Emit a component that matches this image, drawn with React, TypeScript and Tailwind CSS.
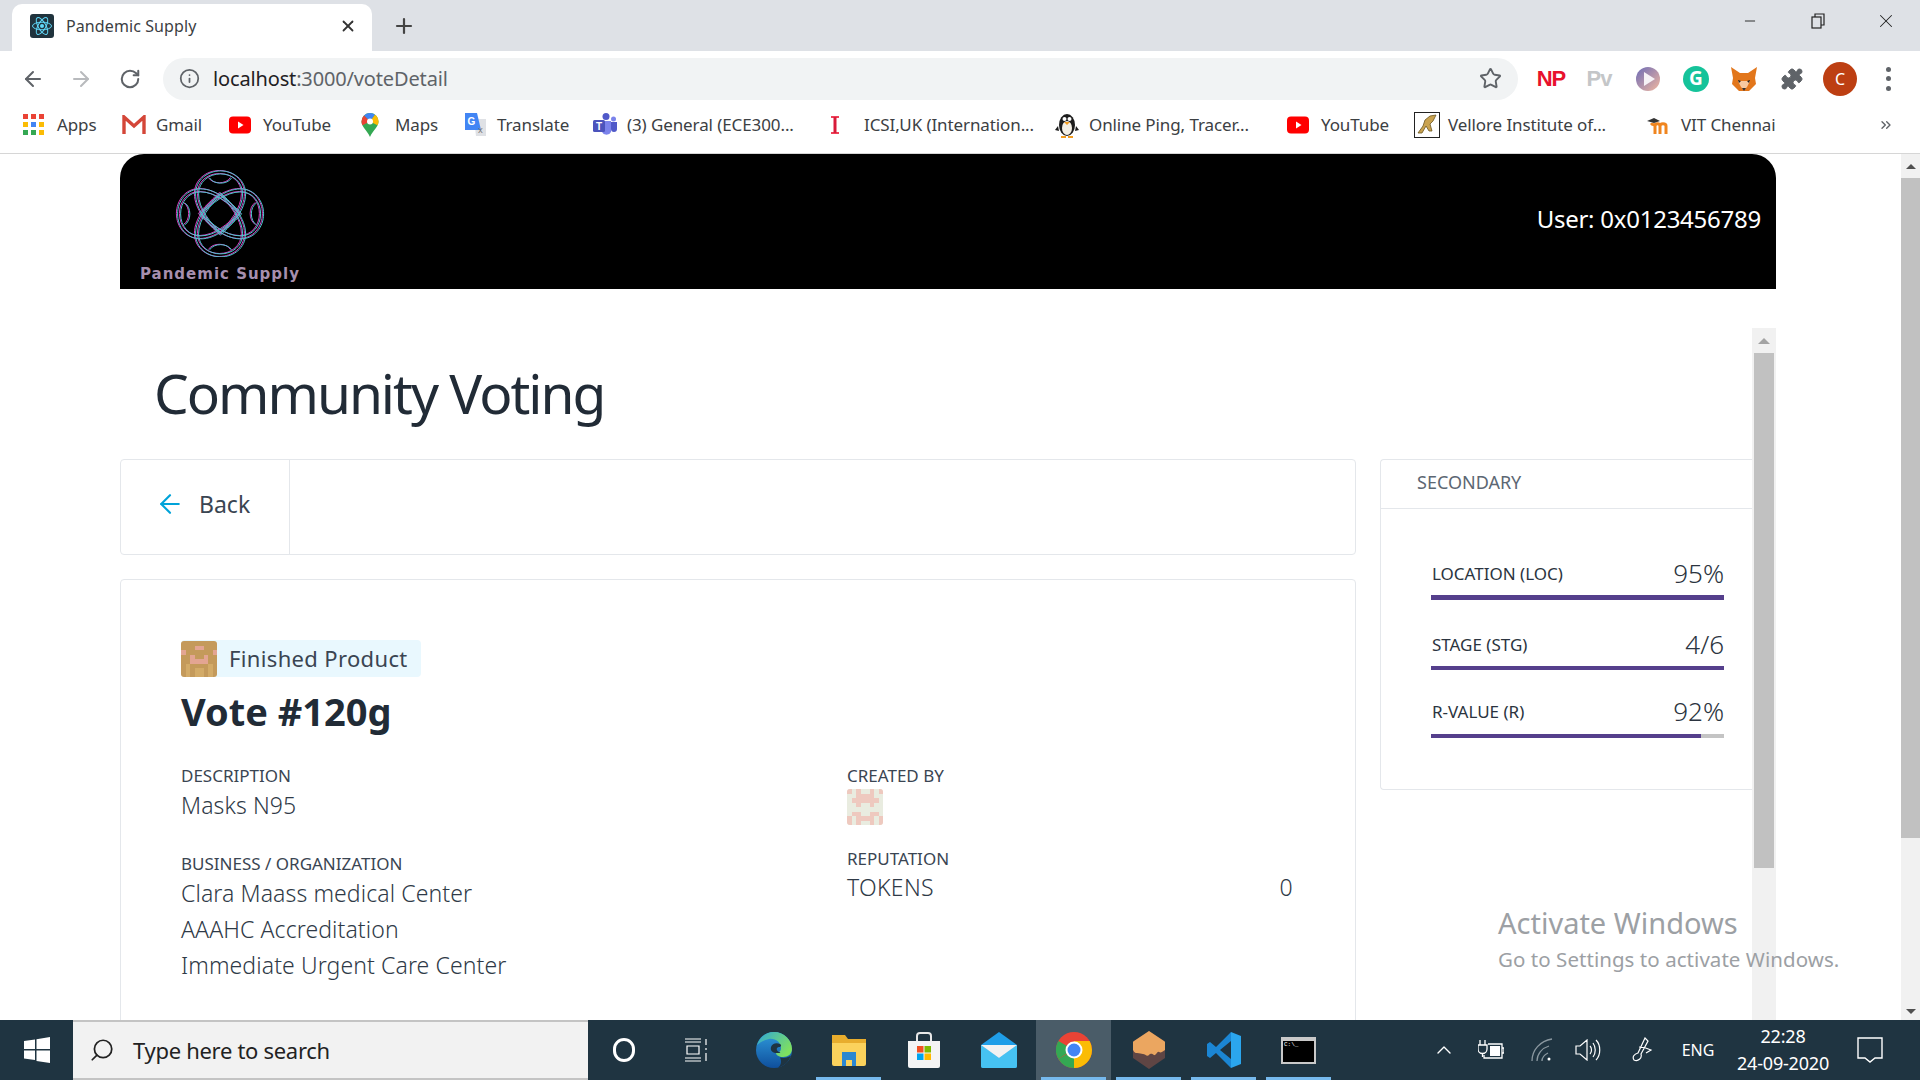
import React from 'react';
import { ArrowLeft, ArrowRight, RotateCw, Info, Star, Plus, X, Minus, Puzzle, ChevronUp, ChevronsRight, Search } from 'lucide-react';

const sans = 'font-["Noto_Sans",sans-serif]';

const BOOKMARKS = [
  { label: 'Apps', icon: 'apps', cls: 'w-[99px]' },
  { label: 'Gmail', icon: 'gmail', cls: 'w-[107px]' },
  { label: 'YouTube', icon: 'yt', cls: 'w-[132px]' },
  { label: 'Maps', icon: 'maps', cls: 'w-[102px]' },
  { label: 'Translate', icon: 'translate', cls: 'w-[130px]' },
  { label: '(3) General (ECE300...', icon: 'teams', cls: 'w-[237px]' },
  { label: 'ICSI,UK (Internation...', icon: 'icsi', cls: 'w-[225px]' },
  { label: 'Online Ping, Tracer...', icon: 'ping', cls: 'w-[232px]' },
  { label: 'YouTube', icon: 'yt', cls: 'w-[127px]' },
  { label: 'Vellore Institute of...', icon: 'vit', cls: 'w-[233px]' },
  { label: 'VIT Chennai', icon: 'moodle', cls: 'w-[140px]' },
];

function BookmarkIcon({ name }: { name: string }) {
  switch (name) {
    case 'apps':
      return (
        <svg width="22" height="22" viewBox="0 0 22 22">
          {[0, 8, 16].map(y =>
            [0, 8, 16].map(x => (
              <rect key={`${x}-${y}`} x={x} y={y} width="5" height="5"
                fill={y === 0 ? '#ea4335' : y === 8 ? (x === 8 ? '#4285f4' : '#fbbc05') : x === 16 ? '#fbbc05' : '#34a853'} />
            ))
          )}
        </svg>
      );
    case 'gmail':
      return (
        <svg width="24" height="20" viewBox="0 0 24 20">
          <path d="M2 19V2l10 9 10-9v17" fill="none" stroke="#d44638" strokeWidth="3.4" />
        </svg>
      );
    case 'yt':
      return (
        <svg width="22" height="18" viewBox="0 0 22 18">
          <rect width="22" height="17" y="0.5" rx="4" fill="#f00" />
          <path d="M9 5.5v7l5.5-3.5z" fill="#fff" />
        </svg>
      );
    case 'maps':
      return (
        <svg width="18" height="24" viewBox="0 0 18 24">
          <path d="M9 0a8.5 8.5 0 0 1 8.5 8.5C17.5 14 12 17 9 24 6 17 .5 14 .5 8.5A8.5 8.5 0 0 1 9 0z" fill="#34a853" />
          <path d="M3 2.5A8.5 8.5 0 0 1 14 1.7L9 8.5z" fill="#4285f4" />
          <path d="M14 1.7a8.5 8.5 0 0 1 3.5 6.8c0 1.5-.5 2.8-1 3.8L9 8.5z" fill="#fbbc05" />
          <path d="M3 2.5A8.5 8.5 0 0 0 .5 8.5c0 1.5.5 2.8 1 3.8L9 8.5z" fill="#ea4335" />
          <circle cx="9" cy="8.5" r="3" fill="#fff" />
        </svg>
      );
    case 'translate':
      return (
        <svg width="24" height="24" viewBox="0 0 24 24">
          <path d="M11 6h12v17H13z" fill="#dfe1e5" />
          <path d="M2 0h12l4 17H2z" fill="#4285f4" />
          <text x="4.5" y="12" fontSize="10" fontWeight="700" fill="#fff" fontFamily="Liberation Sans">G</text>
          <text x="15" y="20" fontSize="9" fill="#777" fontFamily="Noto Sans">x</text>
        </svg>
      );
    case 'teams':
      return (
        <svg width="24" height="24" viewBox="0 0 24 24">
          <circle cx="13" cy="3.5" r="3.5" fill="#5059c9" />
          <circle cx="20.5" cy="6" r="2.5" fill="#7b83eb" />
          <path d="M9 8h9v11a5 5 0 0 1-9 0z" fill="#7b83eb" />
          <path d="M18 9h6v7a3 3 0 0 1-6 0z" fill="#5059c9" />
          <rect x="0" y="7" width="12" height="12" rx="1.5" fill="#4b53bc" />
          <text x="3" y="16.5" fontSize="10" fontWeight="700" fill="#fff" fontFamily="Liberation Sans">T</text>
        </svg>
      );
    case 'icsi':
      return (
        <svg width="10" height="20" viewBox="0 0 10 20">
          <path d="M1 2h8M1 18h8" stroke="#ef4058" strokeWidth="2" />
          <path d="M5 2v16" stroke="#d81b3a" strokeWidth="3" />
        </svg>
      );
    case 'ping':
      return (
        <svg width="24" height="26" viewBox="0 0 24 26">
          <ellipse cx="12" cy="13" rx="8" ry="11" fill="#1c1c1c" />
          <ellipse cx="12" cy="16" rx="5" ry="7" fill="#f4efe4" />
          <circle cx="9.5" cy="7" r="2" fill="#fff" />
          <circle cx="14.5" cy="7" r="2" fill="#fff" />
          <path d="M9 10h6l-3 3z" fill="#f39c1f" />
          <path d="M3 14l-3 4 4 1zM21 14l3 4-4 1z" fill="#1c1c1c" />
          <path d="M6 24h5v2H6zM13 24h5v2h-5z" fill="#f39c1f" />
        </svg>
      );
    case 'vit':
      return (
        <svg width="26" height="26" viewBox="0 0 26 26">
          <rect x="0.5" y="0.5" width="25" height="25" fill="#fff" stroke="#222" />
          <path d="M4 21l5-7 2-6 5-4 6-1-3 6-3 3 2 7h-3l-3-5-4 7z" fill="#c9a24f" stroke="#6b5520" strokeWidth="0.8" />
        </svg>
      );
    default:
      return (
        <svg width="26" height="24" viewBox="0 0 26 24">
          <path d="M8 21v-8c0-3 5-3 5 0v8M13 21v-8c0-3 6-3 6 0v8M8 13c-1-2-3-2-4-1" fill="none" stroke="#f0851f" strokeWidth="3" />
          <path d="M0 8l7-3 6 3-6 2z" fill="#333" />
        </svg>
      );
  }
}

function TabFavicon() {
  return (
    <svg width="24" height="24" viewBox="0 0 24 24" className="shrink-0">
      <rect width="24" height="24" rx="3" fill="#20333d" />
      <circle cx="12" cy="12" r="2" fill="#61dafb" />
      <g fill="none" stroke="#61dafb" strokeWidth="1">
        <ellipse cx="12" cy="12" rx="9.5" ry="3.8" />
        <ellipse cx="12" cy="12" rx="9.5" ry="3.8" transform="rotate(60 12 12)" />
        <ellipse cx="12" cy="12" rx="9.5" ry="3.8" transform="rotate(120 12 12)" />
      </g>
    </svg>
  );
}

function ChromeBar() {
  return (
    <div className={`shrink-0 ${sans}`}>
      <div className="h-[51px] bg-[#dee1e6] flex items-end pl-[12px] text-[#3c4043]">
        <div className="h-[47px] pb-[4px] w-[360px] bg-white rounded-t-[10px] flex items-center pl-[18px] pr-[15px]">
          <TabFavicon />
          <span className="ml-[12px] flex-1 text-[16px] tracking-[0.1px] text-[#3c4043]">Pandemic Supply</span>
          <X size={18} strokeWidth={2.4} className="text-[#333]" />
        </div>
        <div className="h-[47px] pb-[4px] flex items-center ml-[20px]">
          <Plus size={24} strokeWidth={2.2} className="text-[#444]" />
        </div>
        <div className="ml-auto self-start flex items-center h-[42px] text-[#222]">
          <div className="w-[68px] flex justify-center"><Minus size={16} strokeWidth={1.4} /></div>
          <div className="w-[68px] flex justify-center">
            <svg width="14" height="16" viewBox="0 0 14 16" fill="none" stroke="#222" strokeWidth="1.2">
              <rect x="1" y="4" width="9" height="11" />
              <path d="M4 4V1h9v11h-3" />
            </svg>
          </div>
          <div className="w-[68px] flex justify-center"><X size={22} strokeWidth={1.1} /></div>
        </div>
      </div>

      <div className="h-[55px] bg-white flex items-center">
        <div className="w-[65px] flex justify-center"><ArrowLeft size={24} strokeWidth={2} className="text-[#5f6368]" /></div>
        <div className="w-[32px] flex justify-center"><ArrowRight size={24} strokeWidth={2} className="text-[#b8babd]" /></div>
        <div className="w-[48px] ml-[9px] flex justify-center"><RotateCw size={22} strokeWidth={2.2} className="text-[#5f6368]" /></div>
        <div className="ml-[9px] w-[1355px] h-[42px] bg-[#f1f3f4] rounded-full flex items-center pl-[16px] pr-[16px]">
          <Info size={21} strokeWidth={2} className="text-[#5f6368]" />
          <span className="ml-[13px] flex-1 text-[20px] tracking-[-0.15px] text-[#1f2023]">
            localhost<span className="text-[#5f6368]">:3000/voteDetail</span>
          </span>
          <Star size={23} strokeWidth={2} className="text-[#5f6368]" />
        </div>
        <div className="flex items-center ml-[9px]">
          <div className="w-[48px] flex justify-center text-[22px] font-bold tracking-[-1px] text-[#e8112d] [font-family:'Liberation_Sans']">NP</div>
          <div className="w-[48px] flex justify-center text-[22px] font-bold tracking-[-1px] text-[#c4c6c8] [font-family:'Liberation_Sans']">Pv</div>
          <div className="w-[49px] flex justify-center">
            <svg width="26" height="26" viewBox="0 0 26 26">
              <defs><linearGradient id="pl" x1="0" y1="0" x2="1" y2="1"><stop offset="0" stopColor="#6c6bb6" /><stop offset="1" stopColor="#f2b8a0" /></linearGradient></defs>
              <circle cx="13" cy="13" r="12" fill="url(#pl)" />
              <path d="M9 6l11 7-11 7z" fill="#f6f2f6" />
            </svg>
          </div>
          <div className="w-[48px] flex justify-center">
            <div className="w-[26px] h-[26px] rounded-full bg-[#15c39a] flex items-center justify-center text-white text-[19px] font-bold leading-none">G</div>
          </div>
          <div className="w-[48px] flex justify-center">
            <svg width="28" height="26" viewBox="0 0 28 26">
              <path d="M1 1l9 6h8l9-6-2 11 1 6-7 7H9l-7-7 1-6z" fill="#e2761b" />
              <path d="M8 15h12l-3 6-3 3-3-3z" fill="#f6c9a0" />
              <path d="M8 14l3 1-2 2zM20 14l-3 1 2 2z" fill="#222" />
              <path d="M12 22h4l-2 3z" fill="#333" />
            </svg>
          </div>
          <div className="w-[48px] flex justify-center"><Puzzle size={24} fill="#5f6368" strokeWidth={1} className="text-[#5f6368]" /></div>
          <div className="w-[48px] flex justify-center">
            <div className="w-[34px] h-[34px] rounded-full bg-[#bd3f12] flex items-center justify-center text-white text-[16px]">C</div>
          </div>
          <div className="w-[48px] flex flex-col items-center gap-[4.5px]">
            <span className="w-[5px] h-[5px] rounded-full bg-[#5f6368]" />
            <span className="w-[5px] h-[5px] rounded-full bg-[#5f6368]" />
            <span className="w-[5px] h-[5px] rounded-full bg-[#5f6368]" />
          </div>
        </div>
      </div>

      <div className="h-[48px] pb-[10px] bg-white border-b border-[#d6d6d6] flex items-center pl-[23px] text-[17px] tracking-[-0.1px] text-[#3c4043]">
        {BOOKMARKS.map((b, i) => (
          <div key={i} className={`${b.cls} shrink-0 flex items-center`}>
            <div className="w-[34px] shrink-0 flex items-center"><BookmarkIcon name={b.icon} /></div>
            <span className="whitespace-nowrap">{b.label}</span>
          </div>
        ))}
        <ChevronsRight size={16} strokeWidth={2} className="ml-[91px] text-[#5f6368]" />
      </div>
    </div>
  );
}

function Logo() {
  // four teardrop petals, each one's point lands on the opposite star tip
  const petals = [0, 90, 180, 270].map(a => (
    <g key={a} transform={`translate(45 43) rotate(${a})`}>
      <path d="M21 0C10-12-4-25-20-25C-34-25-43-13-43 0C-43 13-34 25-20 25C-4 25 10 12 21 0z" />
      <path d="M19 0C9-10-5-22-20-22C-32-22-40-12-40 0C-40 12-32 22-20 22C-5 22 9 10 19 0z" />
      <path d="M-36-11C-29-7-29 7-36 11" />
    </g>
  ));
  return (
    <svg width="90" height="87" viewBox="0 0 90 86" fill="none" strokeWidth="1">
      <g stroke="#d63fc0" transform="translate(-0.6 0)">{petals}</g>
      <g stroke="#4fc6cf" transform="translate(0.6 0.4)">{petals}</g>
    </svg>
  );
}

// x = main spot colour, o = soft highlight
const BROWN = ['........', '...xx...', 'x......x', '..x..x..', '..xxxx..', '.o....o.', '.o.oo.o.', '.o.oo.o.'];
const PALE = ['x.x..x.x', '..xxxx..', '.xxxxxx.', '..x..x..', '........', '.xx..xx.', 'x.xxxx.x', 'x.x..x.x'];

function Identicon({ rows, bg, fg, soft }: { rows: string[]; bg: string; fg: string; soft?: string }) {
  return (
    <svg width="36" height="36" viewBox="0 0 8 8" shapeRendering="crispEdges" className="shrink-0 rounded-[3px]">
      <rect width="8" height="8" fill={bg} />
      {rows.map((r, y) =>
        r.split('').map((c, x) =>
          c === '.' ? null : <rect key={`${x}-${y}`} x={x} y={y} width="1" height="1" fill={c === 'x' ? fg : soft} />
        )
      )}
    </svg>
  );
}

function Stat({ label, value, pct, cls, barCls }: { label: string; value: string; pct: number; cls: string; barCls: string }) {
  return (
    <div className={cls}>
      <div className="flex items-end justify-between h-[28px] pl-[1px]">
        <span className="text-[17px] leading-[24px] text-[#2b3440]">{label}</span>
        <span className="text-[26px] leading-[28px] font-light text-[#2b3440] translate-y-[1px]">{value}</span>
      </div>
      <div className={`bg-[#c4c4c4] ${barCls}`}>
        <div className="h-full bg-[#553f8c]" style={{ width: `${pct}%` }} />
      </div>
    </div>
  );
}

function Page() {
  return (
    <main className={`flex-1 min-h-0 flex bg-white text-[#212b36] ${sans}`}>
      <div className="flex-1 min-w-0 pl-[120px] pr-[125px] flex flex-col">
        <header className="h-[135px] shrink-0 bg-black rounded-t-[24px] flex items-start justify-between pr-[15px]">
          <div className="w-[200px] flex flex-col items-center pt-[16px]">
            <Logo />
            <span className="mt-[8px] text-[15px] leading-[18px] font-semibold tracking-[1px] text-[#a68fae] [font-family:'DejaVu_Sans']">Pandemic Supply</span>
          </div>
          <span className="mt-[49px] text-[24px] leading-[32px] tracking-[-0.25px] text-white">User: 0x0123456789</span>
        </header>

        <div className="flex-1 min-h-0 mt-[39px] flex">
          <div className="flex-1 min-w-0 overflow-hidden">
            <h1 className="pl-[34px] mt-[27px] text-[55px] leading-[76px] font-normal text-[#212b36] tracking-[-2px]">Community Voting</h1>
            <div className="mt-[28px] flex items-start gap-[24px]">
              <div className="w-[1236px] shrink-0">
                <div className="h-[96px] border border-[#e4e7eb] rounded-[4px] flex">
                  <div className="w-[169px] pb-[6px] border-r border-[#e4e7eb] flex items-center pl-[34px]">
                    <ArrowLeft size={30} strokeWidth={1.7} className="text-[#00a3d9]" />
                    <span className="ml-[14px] text-[23px] text-[#3a4552]">Back</span>
                  </div>
                </div>

                <div className="mt-[24px] h-[600px] border border-[#e4e7eb] rounded-[4px] pt-[60px] pl-[60px]">
                  <div className="w-[240px] h-[37px] bg-[#e9f8fe] rounded-[4px] flex items-center">
                    <Identicon rows={BROWN} bg="#c49a5b" fg="#e3a592" soft="#d3ab68" />
                    <span className="ml-[12px] text-[22px] text-[#3a4552] tracking-[0.35px]">Finished Product</span>
                  </div>
                  <div className="mt-[9px] text-[38px] leading-[50px] font-bold text-[#212b36]">Vote #120g</div>

                  <div className="flex mt-[28px]">
                    <div className="w-[666px]">
                      <div className="text-[17px] leading-[24px] text-[#3a4552]">DESCRIPTION</div>
                      <div className="text-[23px] leading-[35px] font-light tracking-[0.1px] text-[#2f3a47]">Masks N95</div>
                      <div className="mt-[29px] text-[17px] leading-[24px] text-[#3a4552]">BUSINESS / ORGANIZATION</div>
                      <div className="-mt-[1px] text-[23px] leading-[36px] font-light tracking-[0.1px] text-[#2f3a47]">
                        <div>Clara Maass medical Center</div>
                        <div>AAAHC Accreditation</div>
                        <div>Immediate Urgent Care Center</div>
                      </div>
                    </div>
                    <div className="w-[446px]">
                      <div className="text-[17px] leading-[24px] text-[#3a4552]">CREATED BY</div>
                      <div className="mt-[1px]"><Identicon rows={PALE} bg="#e9ece0" fg="#eec9bf" /></div>
                      <div className="mt-[22px] text-[17px] leading-[24px] text-[#3a4552]">REPUTATION</div>
                      <div className="-mt-[2px] flex justify-between text-[23px] leading-[36px] font-light tracking-[0.3px] text-[#2f3a47]">
                        <span>TOKENS</span>
                        <span>0</span>
                      </div>
                    </div>
                  </div>
                </div>
              </div>

              <div className="flex-1 min-w-0 h-[331px] border border-[#e4e7eb] border-r-0 rounded-l-[4px]">
                <div className="h-[49px] pb-[4px] border-b border-[#e4e7eb] flex items-center pl-[36px] text-[18px] text-[#5c6773]">SECONDARY</div>
                <div className="pl-[50px] pr-[28px] pt-[49px]">
                  <Stat label="LOCATION (LOC)" value="95%" pct={100} cls="" barCls="mt-[9px] h-[5px]" />
                  <Stat label="STAGE (STG)" value="4/6" pct={100} cls="mt-[29px]" barCls="mt-[9px] h-[4px]" />
                  <Stat label="R-VALUE (R)" value="92%" pct={92} cls="mt-[26px]" barCls="mt-[10px] h-[4px]" />
                </div>
              </div>
            </div>
          </div>

          <div className="w-[24px] shrink-0 bg-[#f1f1f1] flex flex-col items-center">
            <div className="h-[25px] flex items-center">
              <div className="w-0 h-0 border-x-[6px] border-x-transparent border-b-[6px] border-b-[#a3a3a3]" />
            </div>
            <div className="w-[20px] h-[515px] bg-[#c1c1c1]" />
          </div>
        </div>
      </div>

      <div className="w-[19px] shrink-0 bg-[#f1f1f1] flex flex-col items-center">
        <div className="h-[24px] flex items-center">
          <div className="w-0 h-0 border-x-[5px] border-x-transparent border-b-[5px] border-b-[#505050]" />
        </div>
        <div className="w-[19px] h-[660px] bg-[#c1c1c1]" />
        <div className="mt-auto h-[17px] flex items-center">
          <div className="w-0 h-0 border-x-[5px] border-x-transparent border-t-[5px] border-t-[#505050]" />
        </div>
      </div>
    </main>
  );
}

function Slot({ children, active, bar }: { children: React.ReactNode; active?: boolean; bar?: boolean }) {
  return (
    <div className={`relative w-[75px] h-full flex items-center justify-center ${active ? 'bg-[#4a5c68]' : ''}`}>
      {children}
      {bar && <div className="absolute bottom-0 left-[5px] right-[5px] h-[3px] bg-[#76b9ed]" />}
    </div>
  );
}

function Taskbar() {
  return (
    <footer className={`h-[60px] shrink-0 bg-[#1f3441] flex items-stretch text-white ${sans}`}>
      <div className="w-[73px] flex items-center justify-center">
        <svg width="26" height="26" viewBox="0 0 26 26" fill="#fff">
          <path d="M0 4l11-1.5V12H0zM12.5 2.3L26 0v12H12.5zM0 13.5h11V23L0 21.5zM12.5 13.5H26V26l-13.5-2z" />
        </svg>
      </div>
      <div className="w-[515px] bg-[#f2f2f2] border-2 border-[#c4c4c4] border-x-0 flex items-center pl-[16px] text-[#222]">
        <Search size={26} strokeWidth={1.6} className="-scale-x-100" />
        <span className="ml-[18px] text-[22px] tracking-[-0.3px]">Type here to search</span>
      </div>
      <div className="flex items-stretch -ml-[2px]">
        <Slot><div className="w-[22px] h-[24px] rounded-full border-[3.5px] border-white" /></Slot>
        <Slot>
          <svg width="26" height="24" viewBox="0 0 26 24" fill="none" stroke="#fff" strokeWidth="1.2" className="-ml-[4px]">
            <path d="M1 1h16M1 4h16M3 8h12v8H3zM1 20h16M1 23h16M22 1v6M22 10v2M22 15v8" />
          </svg>
        </Slot>
        <Slot>
          <svg width="38" height="38" viewBox="0 0 38 38">
            <defs>
              <linearGradient id="edb" x1="0" y1="0" x2="0" y2="1"><stop offset="0" stopColor="#2f9bdc" /><stop offset="1" stopColor="#0f4f9c" /></linearGradient>
              <linearGradient id="edg" x1="0" y1="0" x2="1" y2="0.6"><stop offset="0" stopColor="#2fa8d8" /><stop offset="1" stopColor="#7fe05f" /></linearGradient>
            </defs>
            <circle cx="19" cy="19" r="18" fill="url(#edb)" />
            <path d="M2 14C5 5 12 1 19 1c10 0 18 8 18 17 0 5-4 8-9 8-4 0-7-2-7-4 2 0 5-1 5-5 0-6-6-10-12-9-5 1-9 3-12 6z" fill="url(#edg)" />
            <path d="M22 22c-4 0-7-2-6-6 1-3 5-5 9-3 2 1 1 3-1 3-3 0-3 4 0 5 3 1 0 1-2 1z" fill="#1f3441" />
            <path d="M25 26.5c3 .8 8 .6 11-2-2 6-7 11-13 12 3-2 4-6 2-10z" fill="#1f3441" />
          </svg>
        </Slot>
        <Slot bar>
          <svg width="36" height="32" viewBox="0 0 36 32">
            <path d="M1 1h13l3 4h18v6H1z" fill="#e8ad2d" />
            <path d="M1 9h34v21a2 2 0 0 1-2 2H3a2 2 0 0 1-2-2z" fill="#fbd25c" />
            <path d="M11 18h14v14h-4v-6h-6v6h-4z" fill="#2c87d1" />
          </svg>
        </Slot>
        <Slot>
          <svg width="34" height="36" viewBox="0 0 34 36">
            <path d="M10 9V4a3 3 0 0 1 3-3h8a3 3 0 0 1 3 3v5" fill="none" stroke="#e8e8e8" strokeWidth="2" />
            <path d="M1 9h32v25a2 2 0 0 1-2 2H3a2 2 0 0 1-2-2z" fill="#f4f4f4" />
            <rect x="10" y="14" width="6.5" height="6.5" fill="#f25022" />
            <rect x="17.5" y="14" width="6.5" height="6.5" fill="#7fba00" />
            <rect x="10" y="21.5" width="6.5" height="6.5" fill="#00a4ef" />
            <rect x="17.5" y="21.5" width="6.5" height="6.5" fill="#ffb900" />
          </svg>
        </Slot>
        <Slot>
          <svg width="36" height="36" viewBox="0 0 36 36">
            <path d="M18 0l18 13v21a2 2 0 0 1-2 2H2a2 2 0 0 1-2-2V13z" fill="#1f9ee8" />
            <path d="M0 13l18 13 18-13v21a2 2 0 0 1-2 2H2a2 2 0 0 1-2-2z" fill="#46c2f2" />
            <path d="M0 13h36L18 26z" fill="#f2f2f2" />
          </svg>
        </Slot>
        <Slot active bar>
          <svg width="36" height="36" viewBox="0 0 36 36">
            <circle cx="18" cy="18" r="18" fill="#ea4335" />
            <path d="M18 18L2.4 27A18 18 0 0 0 18 36z" fill="#34a853" />
            <path d="M18 36a18 18 0 0 0 18-18 18 18 0 0 0-2.4-9H18z" fill="#fbbc05" />
            <path d="M18 18L2.4 9A18 18 0 0 0 2.4 27L10 22z" fill="#34a853" />
            <circle cx="18" cy="18" r="8.5" fill="#fff" />
            <circle cx="18" cy="18" r="6.5" fill="#4285f4" />
          </svg>
        </Slot>
        <Slot bar>
          <svg width="32" height="38" viewBox="0 0 32 38">
            <path d="M16 0l15 10a2 2 0 0 1 1 2v15L16 38 0 27V12a2 2 0 0 1 1-2z" fill="#5f4544" />
            <path d="M16 0l15 10a2 2 0 0 1 1 2v7c-3 2-4 3-6 2s-3 4-5 3-3-2-5 0-4-1-6-1-3-1-6-1-3-2-4-3v-7a2 2 0 0 1 1-2z" fill="#eba660" />
          </svg>
        </Slot>
        <Slot bar>
          <svg width="34" height="36" viewBox="0 0 34 36">
            <path d="M24 0L9 15 3 10 0 12v12l3 2 6-5 15 15v-9L13 18 24 9z" fill="#1b86d4" />
            <path d="M24 0l10 4v28l-10 4z" fill="#2ba6ee" />
          </svg>
        </Slot>
        <Slot bar>
          <div className="w-[35px] h-[27px] bg-[#c9c9c9] p-[2px] pt-[4px]">
            <div className="w-full h-full bg-black text-[6px] leading-[7px] text-white pl-[1px] [font-family:'Liberation_Mono']">C:\_</div>
          </div>
        </Slot>
      </div>
      <div className="ml-auto flex items-center">
        <ChevronUp size={24} strokeWidth={1.4} className="mr-[22px]" />
        <svg width="26" height="22" viewBox="0 0 26 22" fill="none" stroke="#fff" strokeWidth="1.3" className="mr-[26px]">
          <path d="M2 1v5M7 1v5M0 6h9v4a4 4 0 0 1-9 0zM4.5 14v4" />
          <path d="M10 5h14v14H6v-3" />
          <rect x="12" y="7" width="10" height="10" fill="#fff" stroke="none" />
          <path d="M24 9h2v5h-2" />
        </svg>
        <svg width="24" height="24" viewBox="0 0 24 24" fill="none" stroke="#8b98a0" strokeWidth="1.3" className="mr-[21px]">
          <path d="M2 23C2 12 10 3 22 1M7 23c0-7 5-13 12-15M12 23c0-4 2-6 6-8" />
          <circle cx="19" cy="21" r="1.5" fill="#fff" stroke="none" />
        </svg>
        <svg width="26" height="22" viewBox="0 0 26 22" fill="none" stroke="#fff" strokeWidth="1.2" className="mr-[30px]">
          <path d="M1 7h4l7-6v20l-7-6H1zM15 7c2 2 2 6 0 8M18 4c3 4 3 10 0 14M21 1c5 5 5 15 0 20" />
        </svg>
        <svg width="22" height="26" viewBox="0 0 22 26" fill="none" stroke="#fff" strokeWidth="1.2" className="mr-[25px]">
          <path d="M14 1l3 3-7 13a5 5 0 0 1-7 6c-2-3 0-6 4-7zM8 10c5 0 8 1 12 3l-5 3" />
        </svg>
        <span className="w-[40px] text-center text-[16px] mr-[7px]">ENG</span>
        <div className="w-[116px] text-center text-[18px] leading-[27px] tracking-[-0.2px]">
          <div>22:28</div>
          <div>24-09-2020</div>
        </div>
        <div className="w-[79px] pr-[21px] flex justify-center">
          <svg width="26" height="26" viewBox="0 0 26 26" fill="none" stroke="#fff" strokeWidth="1.4">
            <path d="M1 1h24v20h-7l-5 4-5-4H1z" />
          </svg>
        </div>
      </div>
    </footer>
  );
}

export default function App() {
  return (
    <div className="relative w-[1920px] h-[1080px] overflow-hidden flex flex-col bg-white">
      <ChromeBar />
      <Page />
      <Taskbar />
      {/* watermark sits over the page */}
      <div className={`absolute left-[1498px] top-[904px] text-[#9ca0a4] ${sans}`}>
        <div className="text-[29px] leading-[38px]">Activate Windows</div>
        <div className="text-[20.5px] leading-[30px] tracking-[0.05px] mt-[2px]">Go to Settings to activate Windows.</div>
      </div>
    </div>
  );
}
